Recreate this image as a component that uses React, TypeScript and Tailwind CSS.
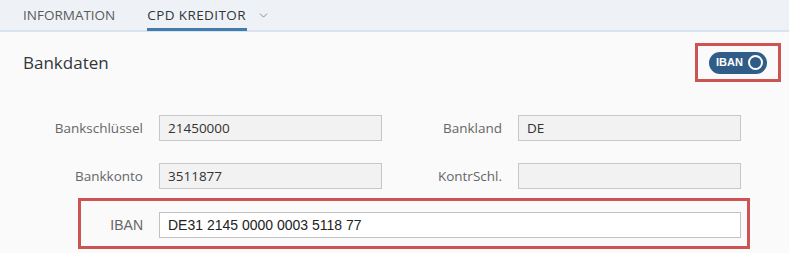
import { ChevronDown } from 'lucide-react'

const font = { fontFamily: '"Open Sans", "Liberation Sans", sans-serif' }

const Field = ({ label, value }: { label: string; value: string }) => (
  <div className="flex items-center gap-4">
    <span className="w-[120px] text-right text-[13.5px] text-[#666]">{label}</span>
    <div className="flex h-[26px] w-[223px] items-center border border-[#c7c7c7] bg-[#f2f2f2] px-2 text-[13.5px] text-[#333]">
      {value}
    </div>
  </div>
)

export default function App() {
  return (
    <div className="h-[253px] w-[800px] bg-white" style={font}>
      <div className="h-[253px] w-[789px] bg-[#fafafa]">
        {/* tabs */}
        <div className="flex h-[32px] items-stretch gap-[32px] border-b-2 border-[#d9e4ee] bg-[#eef2f6] pl-[23px]">
          <div className="flex items-center pt-[1px] text-[13.5px] text-[#5a5a5a]">INFORMATION</div>
          <div className="flex items-center gap-[10px]">
            <div className="-mb-[2px] flex h-full w-[100px] items-center border-b-[3px] border-[#427cac] pt-[1px] text-[13.5px] tracking-[0.4px] text-[#32363a]">
              CPD KREDITOR
            </div>
            <ChevronDown size={13} strokeWidth={1.4} className="text-[#6a6d70]" />
          </div>
        </div>

        {/* header */}
        <div className="flex items-center justify-between pl-[23px] pr-[8px] pt-[11px]">
          <h2 className="text-[17px] text-[#32363a]">Bankdaten</h2>
          <div className="flex h-[39px] w-[86px] items-center justify-center border-[3px] border-[#cc5452]">
            <div className="flex h-[22px] w-[58px] items-center justify-between rounded-full bg-[#2f5d87] pl-[7px] pr-[4px]">
              <span className="text-[11px] font-bold text-white" style={{ fontFamily: '"Liberation Sans", sans-serif' }}>
                IBAN
              </span>
              <span className="h-[15px] w-[15px] rounded-full border-2 border-white" />
            </div>
          </div>
        </div>

        {/* form */}
        <div className="flex flex-col gap-[22px] pl-[23px] pt-[33px]">
          <div className="flex">
            <Field label="Bankschlüssel" value="21450000" />
            <Field label="Bankland" value="DE" />
          </div>
          <div className="flex">
            <Field label="Bankkonto" value="3511877" />
            <Field label="KontrSchl." value="" />
          </div>
        </div>

        <div
          className="ml-[78px] mt-[9px] flex w-[672px] items-center gap-4 border-[3px] border-[#cc5452] pb-[8px] pr-[6px] pt-[11px]"
          style={{ fontFamily: '"Liberation Sans", sans-serif' }}
        >
          <span className="w-[62px] text-right text-[14px] text-[#666]">IBAN</span>
          <div className="flex h-[26px] w-[582px] items-center border border-[#c2c2c2] bg-white px-2 text-[14px] text-[#222]">
            DE31 2145 0000 0003 5118 77
          </div>
        </div>
      </div>
    </div>
  )
}
